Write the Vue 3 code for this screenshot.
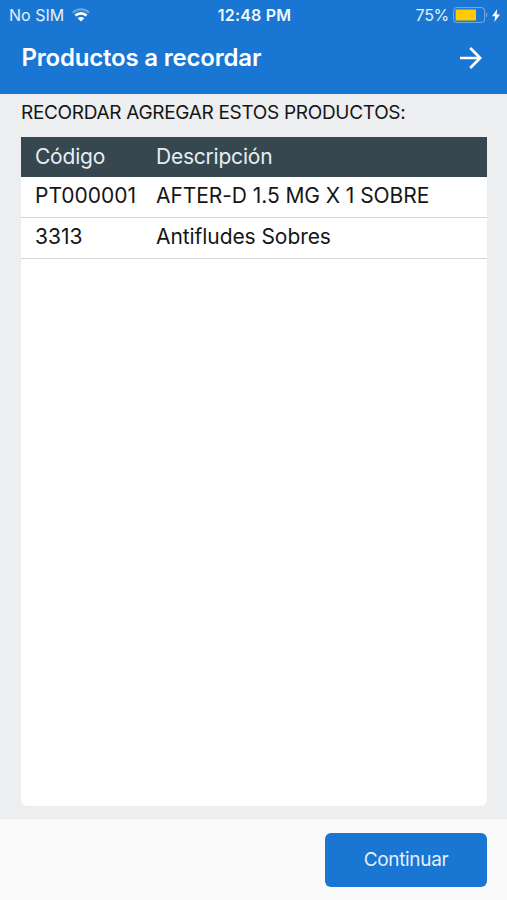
<template>
  <div class="screen">
    <header class="top">
      <div class="status-bar">
        <div class="status-left">
          <span class="carrier">No SIM</span>
          <svg class="wifi" width="18" height="14" viewBox="0 0 18 14" fill="none">
            <path d="M.8 4.700C5.500.3 12.500.3 17.200 4.700" stroke="#fff" stroke-opacity=".35" stroke-width="2.200" />
            <path d="M3.400 7.500c3.100-2.900 8.100-2.900 11.200 0" stroke="#fff" stroke-width="2.600" />
            <path d="M5.700 10.300c1.800-1.700 4.800-1.700 6.600 0L9 13.500z" fill="#fff" />
          </svg>
        </div>
        <span class="time">12:48 PM</span>
        <div class="status-right">
          <span class="percent">75%</span>
          <svg class="battery" width="35" height="16" viewBox="0 0 35 16">
            <rect x=".6" y=".6" width="31" height="14.800" rx="3" fill="none" stroke="#fff" stroke-opacity=".4" />
            <rect x="2.600" y="2.600" width="20.400" height="10.800" rx=".6" fill="#ffcc02" />
            <path d="M33 5.500c1.700.8 1.700 4.200 0 5z" fill="#fff" fill-opacity=".4" />
          </svg>
          <svg class="bolt" width="8" height="13" viewBox="0 0 8 13">
            <path d="M5.300 0L0 7.300h3.200L2.400 13 8 5.400H4.600z" fill="#fff" />
          </svg>
        </div>
      </div>
      <div class="nav-bar">
        <h1 class="title">Productos a recordar</h1>
        <button class="next" aria-label="Continuar">
          <svg width="22" height="22" viewBox="0 0 22 22" fill="none" stroke="#fff" stroke-width="2.700">
            <path d="M0 11h20M10.200 1l10 10-10 10" />
          </svg>
        </button>
      </div>
    </header>

    <main class="content">
      <p class="hint">RECORDAR AGREGAR ESTOS PRODUCTOS:</p>
      <div class="list">
        <div class="row row-head">
          <span class="code">Código</span>
          <span class="name">Descripción</span>
        </div>
        <div v-for="product in products" :key="product.code" class="row">
          <span class="code">{{ product.code }}</span>
          <span class="name">{{ product.name }}</span>
        </div>
      </div>
    </main>

    <footer class="footer">
      <button class="btn">Continuar</button>
    </footer>
  </div>
</template>

<script setup>
import { ref } from 'vue'

const products = ref([
  { code: 'PT000001', name: 'AFTER-D 1.5 MG X 1 SOBRE' },
  { code: '3313', name: 'Antifludes Sobres' }
])
</script>

<style>
body {
  margin: 0;
}
</style>

<style scoped>
.screen {
  display: flex;
  flex-direction: column;
  height: 900px;
  overflow: hidden;
  background: #eceef0;
  color: #161616;
  font-family: Inter, "Liberation Sans", sans-serif;
}

.top {
  flex: none;
  height: 94px;
  background: #1976d2;
  color: #fff;
}

.status-bar {
  display: grid;
  grid-template-columns: 1fr auto 1fr;
  align-items: center;
  height: 30px;
  padding: 0 7px 0 9px;
  font-size: 16px;
}

.status-left,
.status-right {
  display: flex;
  align-items: center;
}

.carrier,
.percent {
  color: #e4f0fb;
}

.percent {
  letter-spacing: -0.3px;
}

.wifi {
  margin-left: 8px;
}

.time {
  color: #f2f8fd;
  font-weight: 600;
  letter-spacing: 0.2px;
}

.status-right {
  justify-content: flex-end;
}

.battery {
  margin-left: 4px;
}

.bolt {
  margin-left: 4px;
}

.nav-bar {
  display: flex;
  align-items: center;
  justify-content: space-between;
  height: 55px;
  padding: 0 25px 0 21.5px;
}

.title {
  margin: 0;
  font-size: 24px;
  font-weight: 600;
  letter-spacing: -0.2px;
}

.next {
  display: flex;
  padding: 0;
  border: 0;
  background: none;
}

.content {
  display: flex;
  flex: 1;
  flex-direction: column;
  padding: 0 20px 13px 21px;
}

.hint {
  height: 43px;
  margin: 0;
  font-size: 19px;
  letter-spacing: -0.31px;
  line-height: 37px;
  white-space: nowrap;
}

.list {
  flex: 1;
  overflow: hidden;
  border-radius: 0 0 6px 6px;
  background: #fff;
}

.row {
  display: flex;
  box-sizing: border-box;
  height: 41px;
  padding-left: 14px;
  border-bottom: 1px solid #d4d4d4;
  font-size: 21px;
  line-height: 38px;
  white-space: nowrap;
}

.row-head {
  height: 40px;
  border-bottom: 0;
  background: #37474f;
  color: #e6eef2;
  letter-spacing: -0.22px;
  line-height: 40px;
}

.code {
  width: 121px;
}

.name {
  letter-spacing: -0.07px;
}

.row-head .name {
  letter-spacing: -0.22px;
}

.footer {
  display: flex;
  flex: none;
  box-sizing: border-box;
  justify-content: flex-end;
  height: 81px;
  padding: 14px 20px 0 0;
  background: #fafafa;
}

.btn {
  width: 162px;
  height: 54px;
  padding: 0 0 1px;
  border: 0;
  border-radius: 6px;
  background: #1976d2;
  color: #e3effa;
  font-family: inherit;
  font-size: 19px;
  letter-spacing: -0.32px;
}
</style>
